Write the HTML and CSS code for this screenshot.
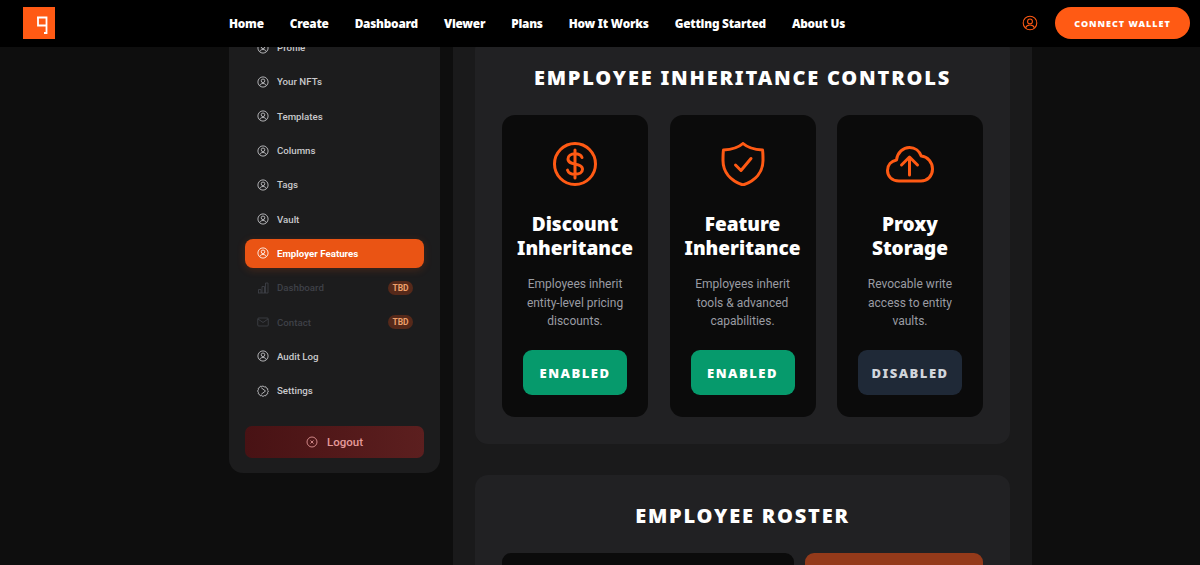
FILE: index.html
```html
<!DOCTYPE html>
<html lang="en">
<head>
    <meta charset="UTF-8">
    <meta name="viewport" content="width=device-width, initial-scale=1.0">
    <title>Employer Features</title>
    <link rel="stylesheet" href="styles.css">
</head>
<body>
    <svg class="defs" width="0" height="0">
        <symbol id="user" viewBox="0 0 24 24">
            <circle cx="12" cy="12" r="10.2"/>
            <circle cx="12" cy="9.6" r="3.6"/>
            <path d="M5.4 19.4c.9-3 3.4-4.4 6.6-4.4s5.700 1.400 6.600 4.400"/>
        </symbol>
    </svg>

    <header class="topbar">
        <div class="logo">
            <svg viewBox="0 0 32 32" width="32" height="32"><path d="M14 10.500h9.500v8h-8.500v-8M23.500 18.500v7.500h-2.500"/></svg>
        </div>
        <nav class="nav">
            <a>Home</a>
            <a>Create</a>
            <a>Dashboard</a>
            <a>Viewer</a>
            <a>Plans</a>
            <a>How It Works</a>
            <a>Getting Started</a>
            <a>About Us</a>
        </nav>
        <div class="topbar-right">
            <svg class="icon account"><use href="#user"/></svg>
            <button class="connect">CONNECT WALLET</button>
        </div>
    </header>

    <div class="page">
        <aside class="sidebar">
            <a class="side-item"><svg class="icon"><use href="#user"/></svg>Profile</a>
            <a class="side-item"><svg class="icon"><use href="#user"/></svg>Your NFTs</a>
            <a class="side-item"><svg class="icon"><use href="#user"/></svg>Templates</a>
            <a class="side-item"><svg class="icon"><use href="#user"/></svg>Columns</a>
            <a class="side-item"><svg class="icon"><use href="#user"/></svg>Tags</a>
            <a class="side-item"><svg class="icon"><use href="#user"/></svg>Vault</a>
            <a class="side-item active"><svg class="icon"><use href="#user"/></svg>Employer Features</a>
            <a class="side-item off">
                <svg class="icon" viewBox="0 0 24 24"><path d="M2 22h20M3 22v-7h5v7M10 22V9h5v13M17 22V2h5v20"/></svg>
                Dashboard<span class="tbd">TBD</span>
            </a>
            <a class="side-item off">
                <svg class="icon" viewBox="0 0 24 24"><rect x="1.500" y="4" width="21" height="16" rx="2"/><path d="M2 6l10 7 10-7"/></svg>
                Contact<span class="tbd">TBD</span>
            </a>
            <a class="side-item"><svg class="icon"><use href="#user"/></svg>Audit Log</a>
            <a class="side-item">
                <svg class="icon" viewBox="0 0 24 24"><path d="M12 2l2.500 1.800 3-.3 1.300 2.700 2.700 1.300-.3 3L23 12l-1.800 2.500.3 3-2.700 1.300-1.300 2.700-3-.3L12 23l-2.500-1.800-3 .3-1.300-2.700-2.700-1.300.3-3L1 12l1.800-2.500-.3-3 2.700-1.300 1.300-2.700 3 .3z"/><path d="M8.500 5.500L17 12l-8.500 6.500"/></svg>
                Settings
            </a>
            <button class="logout">
                <svg class="icon" viewBox="0 0 24 24"><circle cx="12" cy="12" r="10"/><path d="M9 9l6 6M15 9l-6 6"/></svg>
                Logout
            </button>
        </aside>

        <main class="content">
            <section class="panel">
                <h2>EMPLOYEE INHERITANCE CONTROLS</h2>
                <div class="controls">
                    <div class="control">
                        <svg class="big-icon" viewBox="0 0 44 44">
                            <circle cx="22" cy="22" r="20.500"/>
                            <path d="M29 15.500c-1-2.500-3.800-3.700-7-3.700-4 0-7 1.900-7 5.200 0 7 14.500 3.300 14.500 10.300 0 3.300-3.300 5-7.500 5-3.600 0-6.600-1.400-7.500-4.200M22 8v28"/>
                        </svg>
                        <h3>Discount Inheritance</h3>
                        <p>Employees inherit entity-level pricing discounts.</p>
                        <div class="state on">ENABLED</div>
                    </div>
                    <div class="control">
                        <svg class="big-icon" viewBox="0 0 44 44">
                            <path d="M22 1.500c4.500 4 10.500 6 19.500 6.500.5 3 .5 6.500.5 10.500 0 11-7 20-20 24.500-13-4.500-20-13.500-20-24.500 0-4 0-7.500.5-10.500C11.500 7.500 17.500 5.500 22 1.500z"/>
                            <path d="M14.500 23l5.500 5.500 10-12"/>
                        </svg>
                        <h3>Feature Inheritance</h3>
                        <p>Employees inherit tools &amp; advanced capabilities.</p>
                        <div class="state on">ENABLED</div>
                    </div>
                    <div class="control">
                        <svg class="big-icon wide" viewBox="0 0 48 44">
                            <path d="M13 39C6 39 1.500 34.500 1.500 28.500c0-5.500 3.800-9.500 9-10.500C11.500 10.500 17 5.500 23.500 5.500c5.500 0 10 3.500 11.700 8.500 6.500.5 11.300 6.500 11.300 13 0 7-5 12-11.500 12z"/>
                            <path d="M23.500 33V15.500M15.500 23l8-8 8 8"/>
                        </svg>
                        <h3>Proxy Storage</h3>
                        <p>Revocable write access to entity vaults.</p>
                        <div class="state disabled">DISABLED</div>
                    </div>
                </div>
            </section>

            <section class="panel">
                <h2>EMPLOYEE ROSTER</h2>
                <div class="roster">
                    <div class="roster-input"></div>
                    <div class="roster-add"></div>
                </div>
            </section>
        </main>
    </div>
</body>
</html>
```

FILE: styles.css
```css
* {
    box-sizing: border-box;
}
html, body {
    height: 565px;
    overflow: hidden;
}
body {
    margin: 0;
    background: #0e0e0e;
    color: #fff;
    font-family: Roboto, "Noto Sans", sans-serif;
}
.defs {
    display: block;
}
.icon {
    width: 12px;
    height: 12px;
    flex: none;
    fill: none;
    stroke: currentColor;
    stroke-width: 1.700;
}

/* top bar */
.topbar {
    height: 47px;
    background: #000;
    display: flex;
    align-items: center;
    padding: 0 10px 1px 23px;
}
.logo {
    width: 32px;
    height: 32px;
    background: #ff5a14;
}
.logo svg {
    display: block;
    fill: none;
    stroke: #fff;
    stroke-width: 1.800;
}
.nav {
    display: flex;
    gap: 26px;
    margin-left: 174px;
    font-family: "Noto Sans", sans-serif;
    font-size: 11.800px;
    font-weight: 900;
    letter-spacing: -0.230px;
}
.topbar-right {
    display: flex;
    align-items: center;
    gap: 17px;
    margin-left: auto;
}
.account {
    width: 16px;
    height: 16px;
    color: #ff5a14;
    stroke-width: 1.600;
}
.connect {
    width: 135px;
    height: 32px;
    border: none;
    border-radius: 16px;
    background: #ff5a14;
    color: #fff;
    font-family: "Noto Sans", sans-serif;
    font-size: 9px;
    font-weight: 900;
    letter-spacing: 1px;
}

/* page body, scrolled so the tops of sidebar and panel sit under the bar */
.page {
    height: 518px;
    overflow: hidden;
    display: flex;
    align-items: flex-start;
    padding-left: 229px;
}
.sidebar {
    width: 211px;
    flex: none;
    margin-top: -14px;
    padding: 0 16px 15px;
    background: #1c1c1d;
    border-radius: 0 0 14px 14px;
    display: flex;
    flex-direction: column;
    gap: 5px;
}
.side-item {
    height: 29.300px;
    padding: 0 11px 0 12px;
    display: flex;
    align-items: center;
    gap: 8px;
    border-radius: 8px;
    color: #c9c9cc;
    font-size: 9.700px;
    font-weight: 500;
}
.side-item.active {
    background: #ea5414;
    box-shadow: 0 2px 8px rgba(234, 84, 20, 0.2);
    color: #fff;
    font-weight: 700;
}
.side-item.off {
    color: #3f4148;
}
.tbd {
    margin-left: auto;
    width: 25px;
    height: 14px;
    line-height: 14px;
    text-align: center;
    border-radius: 7px;
    background: #56291a;
    color: #eda06c;
    font-size: 8.500px;
    font-weight: 700;
}
.logout {
    height: 32px;
    margin-top: 16px;
    border: none;
    border-radius: 7px;
    background: linear-gradient(90deg, #481214, #5c1f1f);
    color: #e59a9a;
    font-family: inherit;
    font-size: 11.500px;
    font-weight: 500;
    display: flex;
    align-items: center;
    justify-content: center;
    gap: 9px;
}

/* main column */
.content {
    width: 579px;
    flex: none;
    margin-left: 13px;
    margin-top: -10px;
    padding: 0 22px 40px;
    background: #1a1a1b;
    display: flex;
    flex-direction: column;
    gap: 31px;
}
.panel {
    background: #212123;
    border-radius: 13px;
    padding: 27px;
}
.panel h2 {
    margin: 0 0 23px;
    text-align: center;
    font-family: "Noto Sans", sans-serif;
    font-size: 20px;
    line-height: 28px;
    font-weight: 900;
    letter-spacing: 1.800px;
}
.controls {
    display: grid;
    grid-template-columns: repeat(3, 146px);
    justify-content: space-between;
}
.control {
    height: 302px;
    padding-top: 27px;
    background: #0b0b0b;
    border-radius: 13px;
    display: flex;
    flex-direction: column;
    align-items: center;
    text-align: center;
}
.big-icon {
    width: 44px;
    height: 44px;
    fill: none;
    stroke: #ff5a14;
    stroke-width: 3;
    stroke-linecap: round;
    stroke-linejoin: round;
}
.big-icon.wide {
    width: 48px;
}
.control h3 {
    margin: 26px 0 0;
    width: 120px;
    font-family: "Noto Sans", sans-serif;
    font-size: 19px;
    line-height: 24px;
    font-weight: 900;
}
.control p {
    margin: 15px 0 0;
    width: 112px;
    color: #9a9ca3;
    font-size: 12px;
    line-height: 18.500px;
}
.state {
    width: 104px;
    height: 45px;
    margin-top: 19px;
    border-radius: 9px;
    font-family: "Noto Sans", sans-serif;
    font-size: 13px;
    font-weight: 900;
    letter-spacing: 1.500px;
    line-height: 47px;
}
.state.on {
    background: #069a6c;
}
.state.disabled {
    background: #1f2937;
    color: #d1d5db;
}
.roster {
    display: flex;
    gap: 11px;
}
.roster-input {
    width: 292px;
    height: 50px;
    background: #0b0b0b;
    border-radius: 9px;
}
.roster-add {
    flex: 1;
    height: 50px;
    background: #943a1a;
    border-radius: 9px;
}
```
